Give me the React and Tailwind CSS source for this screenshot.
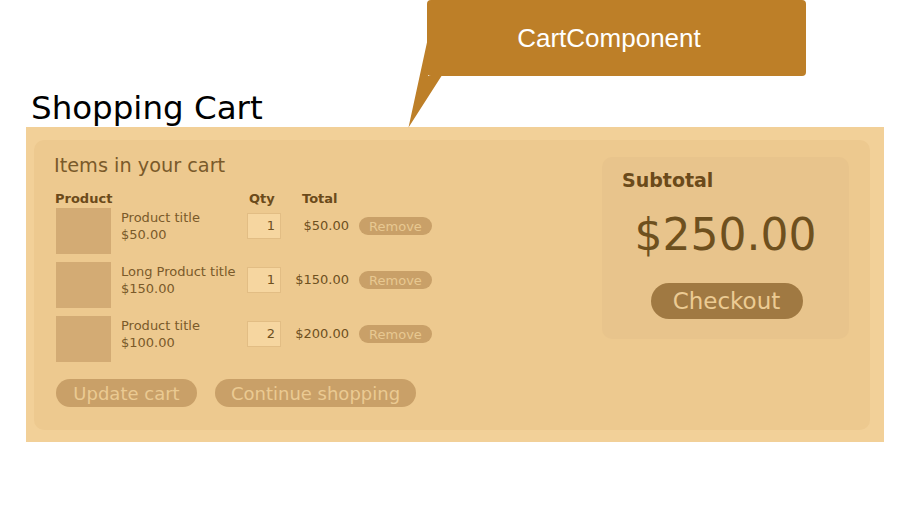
import React from "react";

const items = [
  { title: "Product title", price: "$50.00", qty: 1, total: "$50.00" },
  { title: "Long Product title", price: "$150.00", qty: 1, total: "$150.00" },
  { title: "Product title", price: "$100.00", qty: 2, total: "$200.00" },
];

export default function App() {
  return (
    <div
      className="relative w-[919px] h-[507px] bg-white overflow-hidden"
      style={{ fontFamily: '"DejaVu Sans", sans-serif' }}
    >
      {/* Callout */}
      <div className="absolute left-[427px] top-0 w-[379px] h-[76px] rounded-[4px] bg-[#bd7f28] flex items-center justify-center pr-[15px]">
        <span
          className="text-white text-[26px] leading-[30px]"
          style={{ fontFamily: '"Liberation Sans", Arial, sans-serif' }}
        >
          CartComponent
        </span>
      </div>
      <svg className="absolute left-[400px] top-0" width="50" height="130" viewBox="0 0 50 130">
        <polygon points="27.5,40 28,76 41.5,76 8.5,127.5" fill="#bd7f28" />
      </svg>

      {/* Title */}
      <div className="pt-[90px] pl-[31px]">
        <h1 className="text-[32.5px] leading-[37px] text-black font-normal">Shopping Cart</h1>
      </div>

      {/* Banner */}
      <div className="ml-[26px] w-[858px] h-[315px] bg-[#f2d098] pl-[8px] pr-[14px] pt-[13px]">
        <div className="h-[290px] rounded-[10px] bg-[#edc98f] flex">
          {/* Left column */}
          <div className="flex-1 pl-[20px] pt-[15px]">
            <div className="text-[19.3px] leading-[22px] text-[#7a5a2a]">Items in your cart</div>
            <div className="mt-[14px] flex text-[13px] leading-[15px] font-bold text-[#6b4a1a] pl-[1px]">
              <div className="w-[194px]">Product</div>
              <div className="w-[53px]">Qty</div>
              <div>Total</div>
            </div>
            <div className="mt-[2px] flex flex-col gap-[8px] pl-[2px]">
              {items.map((it, i) => (
                <div key={i} className="flex items-start">
                  <div className="w-[55px] h-[46px] bg-[#d3ab74]" />
                  <div className="h-[36px] flex items-center">
                    <div className="w-[136px] pl-[10px] text-[13px] leading-[17px] text-[#7a5a2a]">
                      <div>{it.title}</div>
                      <div>{it.price}</div>
                    </div>
                    <div className="w-[34px] h-[26px] bg-[#f6d6a0] border border-[#e2bd84] flex items-center justify-end pr-[5px] text-[13px] text-[#6e501e]">
                      {it.qty}
                    </div>
                    <div className="w-[68px] text-right text-[13px] text-[#6e501e]">{it.total}</div>
                    <div className="ml-[10px] w-[73px] h-[18px] rounded-full bg-[#c9a068] flex items-center justify-center text-[13px] leading-[15px] text-[#e8c891]">
                      Remove
                    </div>
                  </div>
                </div>
              ))}
            </div>
            <div className="mt-[17px] flex gap-[18px] pl-[2px]">
              <div className="w-[141px] h-[28px] rounded-full bg-[#c9a068] flex items-center justify-center text-[18px] leading-[21px] text-[#ebca92]">
                Update cart
              </div>
              <div className="w-[201px] h-[28px] rounded-full bg-[#c9a068] flex items-center justify-center text-[18px] leading-[21px] text-[#ebca92]">
                Continue shopping
              </div>
            </div>
          </div>

          {/* Subtotal */}
          <div className="mt-[17px] mr-[21px] w-[247px] h-[182px] rounded-[10px] bg-[#e8c48c] pt-[12px] pb-[20px]">
            <div className="pl-[20px] text-[19px] leading-[22px] font-bold text-[#6b4a1a]">Subtotal</div>
            <div className="mt-[18px] text-center text-[44px] leading-[51px] text-[#6e501e]">$250.00</div>
            <div className="mt-[23px] mx-auto w-[152px] h-[36px] rounded-full bg-[#a07942] flex items-center justify-center text-[23px] leading-[27px] text-[#eccb93] translate-x-[1px]">
              Checkout
            </div>
          </div>
        </div>
      </div>
    </div>
  );
}
